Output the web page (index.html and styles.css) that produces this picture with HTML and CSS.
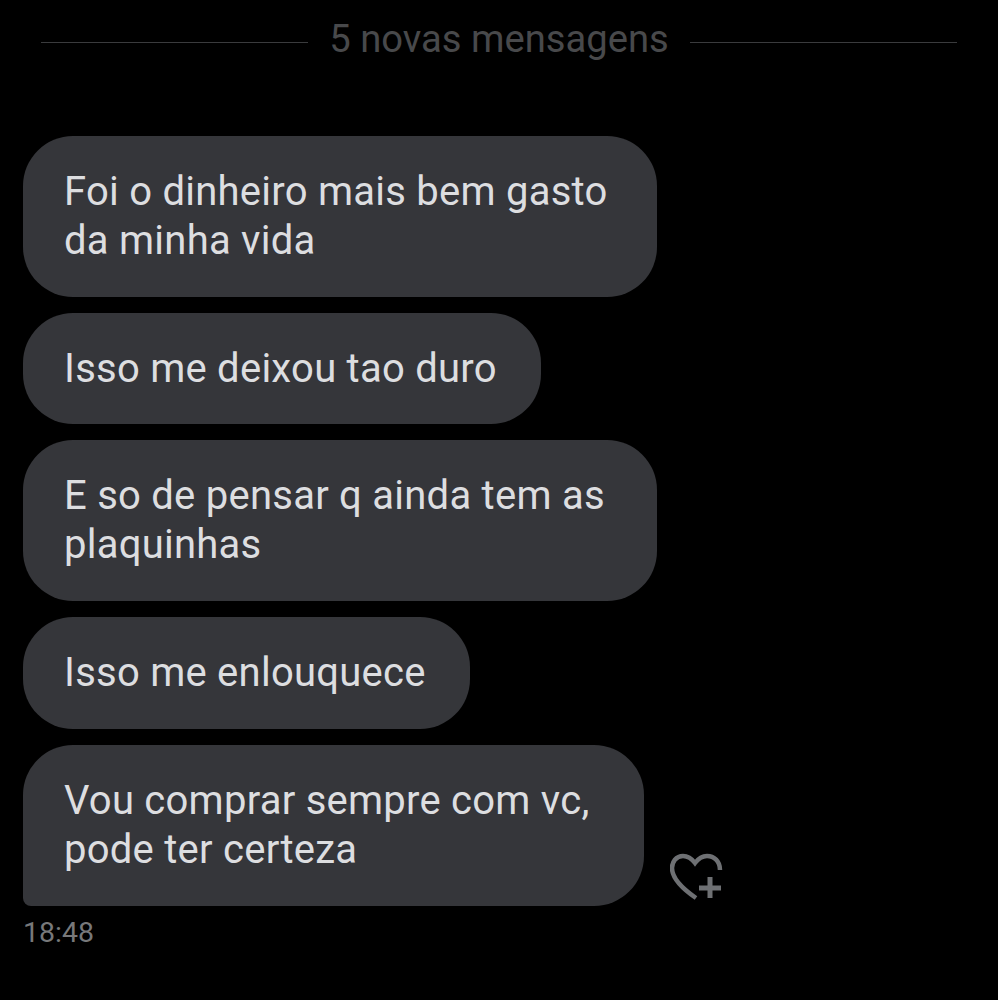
FILE: index.html
```html
<!DOCTYPE html>
<html>
<head>
    <meta charset="utf-8">
    <title>Mensagens</title>
    <link rel="stylesheet" href="styles.css">
</head>
<body>
    <div class="divider">
        <span class="divider-line"></span>
        <span class="divider-text">5 novas mensagens</span>
        <span class="divider-line"></span>
    </div>

    <div class="messages">
        <div class="bubble bubble-wide">Foi o dinheiro mais bem gasto<br>da minha vida</div>
        <div class="bubble">Isso me deixou tao duro</div>
        <div class="bubble bubble-wide">E so de pensar q ainda tem as<br>plaquinhas</div>
        <div class="bubble">Isso me enlouquece</div>
        <div class="last-row">
            <div class="bubble bubble-last">Vou comprar sempre com vc,<br>pode ter certeza</div>
            <svg class="react-icon" width="54" height="48" viewBox="0 0 54 48" fill="none" stroke="#6e7073" stroke-width="4.5">
                <path d="M50 17 C50 8 44 3 37 3 C32 3 28 6 25 10 C22 6 18 3 13 3 C6 3 2 9 2 15 C2 26 13 36 26 45"/>
                <path d="M29 35 H51 M40 24 V45" stroke-width="5"/>
            </svg>
        </div>
    </div>

    <div class="time">18:48</div>
</body>
</html>
```

FILE: styles.css
```css
body{
    background-color: #000;
    color: #dddee0;
    font-family: 'Roboto', sans-serif;
    margin: 0;
}

.divider{
    display: flex;
    align-items: center;
    gap: 21px;
    height: 84px;
    padding: 0 41px;
    color: #48494b;
}
.divider-line{
    flex: 1;
    height: 1px;
    background-color: #3a3b3d;
}
.divider-text{
    font-size: 38.2px;
    line-height: 78px;
    height: 78px;
    margin-top: -6px;
}

.messages{
    display: flex;
    flex-direction: column;
    align-items: flex-start;
    gap: 16px;
    margin-top: 52px;
    padding-left: 23px;
}
.bubble{
    background-color: #35363a;
    border-radius: 50px;
    padding: 32px 44px 31px 41px;
    font-size: 40px;
    letter-spacing: 0.25px;
    line-height: 48.8px;
}
.bubble-wide{
    width: 549px;
}
.bubble-last{
    width: 536px;
    padding-bottom: 32px;
    border-bottom-left-radius: 8px;
}
.last-row{
    display: flex;
    align-items: flex-end;
    gap: 25px;
}
.react-icon{
    margin-left: 1px;
    margin-bottom: 5px;
}

.time{
    margin: 9px 0 0 23px;
    font-size: 28.5px;
    line-height: 36px;
    color: #77787a;
}
```
